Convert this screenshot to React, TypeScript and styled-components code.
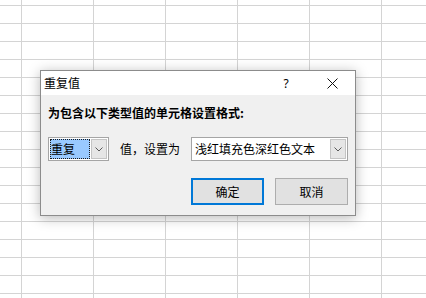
import React from "react";
import styled, { createGlobalStyle } from "styled-components";

const Global = createGlobalStyle`
  html, body { margin: 0; padding: 0; }
  body {
    width: 426px;
    height: 298px;
    overflow: hidden;
    font-family: "Noto Sans CJK SC", "Noto Sans", sans-serif;
    background-color: #ffffff;
    background-image:
      linear-gradient(to right, #d4d4d4 1px, transparent 1px),
      linear-gradient(to bottom, #d4d4d4 1px, transparent 1px);
    background-size: 72px 18px;
    background-position: 21px 5px;
  }
  #root { position: relative; width: 426px; height: 298px; }
`;

const Dialog = styled.div`
  position: absolute;
  left: 40px;
  top: 70px;
  width: 316px;
  height: 146px;
  box-sizing: border-box;
  border: 1px solid #8c8c8c;
  background: #f0f0f0;
  box-shadow: 0 2px 12px rgba(0, 0, 0, 0.28);
  display: flex;
  flex-direction: column;
  font-size: 12px;
  color: #000;
`;

const TitleBar = styled.div`
  height: 24px;
  background: #ffffff;
  display: flex;
  align-items: center;
  flex: none;
`;

const Title = styled.div`
  flex: 1;
  padding-left: 3px;
  line-height: 24px;
  font-size: 12px;
`;

const CaptionButton = styled.div`
  width: 46px;
  height: 24px;
  display: flex;
  align-items: center;
  justify-content: center;
  font-size: 12px;
  font-family: "Segoe UI", "Noto Sans", sans-serif;
`;

const Body = styled.div`
  flex: 1;
  padding: 10px 7px 0 7px;
  display: flex;
  flex-direction: column;
`;

const Heading = styled.div`
  font-weight: bold;
  line-height: 16px;
  height: 16px;
`;

const Row = styled.div`
  margin-top: 16px;
  display: flex;
  align-items: center;
  height: 24px;
`;

const Combo = styled.div<{ $w: number }>`
  width: ${(p) => p.$w}px;
  height: 24px;
  box-sizing: border-box;
  border: 1px solid #a5a5a5;
  background: #ffffff;
  display: flex;
  align-items: stretch;
  padding: 1px;
`;

const ComboText = styled.div<{ $selected?: boolean }>`
  flex: 1;
  display: flex;
  align-items: center;
  padding-left: ${(p) => (p.$selected ? "1px" : "2px")};
  line-height: 20px;
  ${(p) =>
    p.$selected
      ? `
    background: #99c9ff;
    outline: 1px dotted #1a1a1a;
    outline-offset: -1px;
    margin-right: 1px;
  `
      : ""}
`;

const DropButton = styled.div`
  width: 16px;
  box-sizing: border-box;
  border: 1px solid #c4c4c4;
  background: #e6e6e6;
  display: flex;
  align-items: center;
  justify-content: center;
`;

const Label = styled.div`
  margin: 0 11px 0 11px;
  line-height: 20px;
`;

const ButtonRow = styled.div`
  margin-top: 17px;
  display: flex;
  justify-content: flex-end;
  gap: 11px;
`;

const Button = styled.div<{ $primary?: boolean }>`
  width: 73px;
  height: 27px;
  box-sizing: border-box;
  background: #e1e1e1;
  border: ${(p) => (p.$primary ? "2px solid #0078d7" : "1px solid #adadad")};
  display: flex;
  align-items: center;
  justify-content: center;
  line-height: 20px;
`;

const Chevron = () => (
  <svg width="8" height="5" viewBox="0 0 8 5">
    <path d="M0.5 0.5 L4 4 L7.5 0.5" fill="none" stroke="#5a5a5a" strokeWidth="1" />
  </svg>
);

const CloseIcon = () => (
  <svg width="11" height="11" viewBox="0 0 11 11">
    <path d="M0.5 0.5 L10.5 10.5 M10.5 0.5 L0.5 10.5" stroke="#111" strokeWidth="1" />
  </svg>
);

export default function App() {
  return (
    <>
      <Global />
      <Dialog>
        <TitleBar>
          <Title>重复值</Title>
          <CaptionButton>?</CaptionButton>
          <CaptionButton>
            <CloseIcon />
          </CaptionButton>
        </TitleBar>
        <Body>
          <Heading>为包含以下类型值的单元格设置格式:</Heading>
          <Row>
            <Combo $w={61}>
              <ComboText $selected>重复</ComboText>
              <DropButton>
                <Chevron />
              </DropButton>
            </Combo>
            <Label>值，设置为</Label>
            <Combo $w={157}>
              <ComboText>浅红填充色深红色文本</ComboText>
              <DropButton>
                <Chevron />
              </DropButton>
            </Combo>
          </Row>
          <ButtonRow>
            <Button $primary>确定</Button>
            <Button>取消</Button>
          </ButtonRow>
        </Body>
      </Dialog>
    </>
  );
}
